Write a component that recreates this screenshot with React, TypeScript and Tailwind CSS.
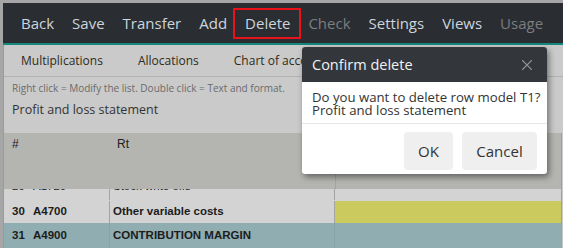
import { X } from 'lucide-react'

const NAV = [
  { label: 'Back' },
  { label: 'Save' },
  { label: 'Transfer' },
  { label: 'Add' },
  { label: 'Delete', active: true },
  { label: 'Check', disabled: true },
  { label: 'Settings' },
  { label: 'Views' },
  { label: 'Usage', disabled: true },
]

const TABS = ['Multiplications', 'Allocations', 'Chart of accounts']

const gridFont = { fontFamily: "'Liberation Sans', Arial, sans-serif" }

export default function App() {
  return (
    <div
      className="relative w-[563px] h-[248px] overflow-hidden bg-[#a6a6a6] pt-[3px] pl-[3px]"
      style={{ fontFamily: "'Open Sans', 'Liberation Sans', sans-serif" }}
    >
      {/* Top menu */}
      <nav className="h-[40px] bg-[#2a2d31] flex items-center pl-[18px] gap-[18px] text-[15px]">
        {NAV.map(item => (
          <span
            key={item.label}
            className={`relative leading-none ${item.disabled ? 'text-[#7b7e82]' : 'text-[#cdd5de]'}`}
          >
            {item.label}
            {item.active && (
              <span className="absolute -left-[12px] -right-[11px] -top-[8px] -bottom-[8px] border-2 border-[#e8121b]" />
            )}
          </span>
        ))}
      </nav>
      <div className="h-[2px] bg-[#15877d]" />

      {/* Content */}
      <div className="border-l border-[#9b9b9b] bg-[#cacaca] h-[203px] flex flex-col">
        <div className="h-[33px] flex items-center pl-[17px] gap-[35px] text-[12px] text-[#2e2a20] border-b border-[#b2b2b2] whitespace-nowrap">
          {TABS.map(t => (
            <span key={t}>{t}</span>
          ))}
        </div>
        <div className="pl-[8px] pt-[4px] text-[10px] text-[#6b6b6b] leading-[14px] whitespace-nowrap">
          Right click = Modify the list. Double click = Text and format.
        </div>
        <div className="pl-[8px] pt-[6px] text-[12.5px] text-[#333] leading-[18px]">Profit and loss statement</div>

        {/* Grid */}
        <div className="mt-[14px] flex flex-col border-r border-[#a0a0a0] mr-[1px]" style={gridFont}>
          <div className="h-[56px] bg-[#b4b4b1] flex text-[12px] text-[#222] pt-[2px]">
            <div className="w-[106px] pl-[8px]">#</div>
            <div className="w-[226px] pl-[7px] border-r border-[#a3a3a3]">Rt</div>
            <div className="flex-1" />
          </div>

          <div className="h-[12px] overflow-hidden bg-[#d3d3d3]">
            <div className="-mt-[15px] h-[26px] flex items-center text-[11.5px] text-[#222]">
              <div className="w-[29px] pl-[8px]">29</div>
              <div className="w-[76px]">A1720</div>
              <div className="w-[226px] h-full flex items-center pl-[3px] border-l border-r border-[#a3a3a3]">Stock write offs</div>
              <div className="flex-1" />
            </div>
          </div>

          <div className="h-[22px] flex items-center text-[11.5px] font-bold text-[#1c1c1c] bg-[#d3d3d3]">
            <div className="w-[29px] pl-[8px]">30</div>
            <div className="w-[76px]">A4700</div>
            <div className="w-[226px] h-full flex items-center pl-[3px] border-l border-r border-[#a3a3a3]">Other variable costs</div>
            <div className="flex-1 h-full bg-[#cbca5e]" />
          </div>

          <div className="h-[25px] flex items-center text-[11.5px] font-bold text-[#1c1c1c] bg-[#90adb1]">
            <div className="w-[29px] pl-[8px]">31</div>
            <div className="w-[76px]">A4900</div>
            <div className="w-[226px] h-full flex items-center pl-[3px] border-l border-r border-[#88a2a6]">CONTRIBUTION MARGIN</div>
            <div className="flex-1" />
          </div>
        </div>
      </div>

      {/* Dialog */}
      <div className="absolute left-[302px] top-[47px] w-[245px] rounded-[3px] bg-white shadow-[2px_3px_6px_rgba(0,0,0,0.45)] overflow-hidden">
        <div className="h-[35px] bg-[#33373c] flex items-center justify-between pl-[10px] pr-[11px]">
          <span className="text-[14.5px] text-[#f2f2f2]">Confirm delete</span>
          <X size={18} strokeWidth={1.5} className="text-[#8c9096]" />
        </div>
        <div className="px-[10px] pt-[9px] pb-[6px] text-[13.2px] leading-[13px] text-[#333] border-b border-[#e6e6e6] whitespace-nowrap">
          <div>Do you want to delete row model T1?</div>
          <div>Profit and loss statement</div>
        </div>
        <div className="flex justify-end gap-[9px] pt-[8px] pb-[4px] pr-[10px]">
          <button className="w-[49px] h-[38px] rounded-[4px] bg-[#efefef] text-[15px] text-[#333]">OK</button>
          <button className="w-[75px] h-[38px] rounded-[4px] bg-[#efefef] text-[15px] text-[#333]">Cancel</button>
        </div>
      </div>
    </div>
  )
}
